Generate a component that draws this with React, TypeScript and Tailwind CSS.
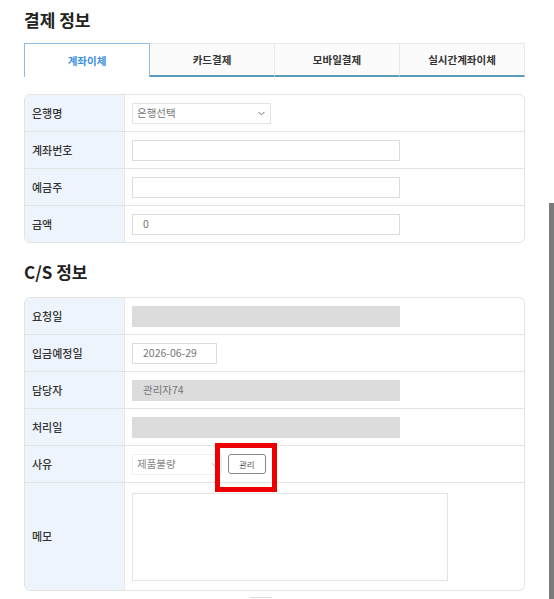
import { ChevronDown } from "lucide-react";

const font = { fontFamily: '"Noto Sans CJK KR", "Noto Sans", sans-serif' };

const tabs = ["계좌이체", "카드결제", "모바일결제", "실시간계좌이체"];

function Row({ label, children, last, tall }: { label: string; children: React.ReactNode; last?: boolean; tall?: boolean }) {
  return (
    <div className={`flex ${last ? "" : "border-b border-[#e3e3e3]"} ${tall ? "h-[107px]" : last ? "h-[36px]" : "h-[37px]"}`}>
      <div className="w-[100px] shrink-0 bg-[#eef4fb] border-r border-[#e3e8ef] flex items-center pl-[7px] text-[11px] font-medium text-[#333]">
        {label}
      </div>
      <div className="flex-1 flex items-center pl-[7px]">{children}</div>
    </div>
  );
}

function Input({ w, value, disabled }: { w: string; value?: string; disabled?: boolean }) {
  return (
    <div
      className={`${w} h-[21px] border ${disabled ? "bg-[#dcdcdc] border-[#dcdcdc]" : "bg-white border-[#dcdcdc]"} flex items-center px-[10px] text-[10.5px] text-[#777]`}
    >
      {value}
    </div>
  );
}

function Select({ w, value }: { w: string; value: string }) {
  return (
    <div className={`${w} h-[21px] border border-[#e4e4e4] bg-white flex items-center justify-between pl-[4px] pr-[3px] text-[10.5px] text-[#777]`}>
      <span>{value}</span>
      <ChevronDown className="w-[11px] h-[11px] text-[#666]" strokeWidth={2} />
    </div>
  );
}

export default function App() {
  return (
    <div style={font} className="relative w-[554px] h-[599px] bg-white overflow-hidden">
      <div className="pl-[24px] pr-[29px] pt-[8px]">
        <h2 className="text-[17px] font-bold text-[#222] leading-[24px]">결제 정보</h2>

        <div className="mt-[11px] flex h-[34px]">
          {tabs.map((t, i) => (
            <div
              key={t}
              className={`flex-1 flex items-center justify-center text-[10.5px] font-bold ${
                i === 0
                  ? "bg-white border border-[#8fbbe0] border-b-0 text-[#3d8fe0]"
                  : "bg-[#fbfbfb] border-t border-r border-[#e8e8e8] border-b-2 border-b-[#5b9db8] text-[#333]"
              }`}
            >
              {t}
            </div>
          ))}
        </div>

        <div className="mt-[17px] border border-[#e3e3e3] rounded-[6px] overflow-hidden">
          <Row label="은행명">
            <Select w="w-[139px]" value="은행선택" />
          </Row>
          <Row label="계좌번호">
            <Input w="w-[268px]" />
          </Row>
          <Row label="예금주">
            <Input w="w-[268px]" />
          </Row>
          <Row label="금액" last>
            <Input w="w-[268px]" value="0" />
          </Row>
        </div>

        <h2 className="mt-[17px] text-[17px] font-bold text-[#222] leading-[24px]">C/S 정보</h2>

        <div className="mt-[13px] border border-[#e3e3e3] rounded-[6px] overflow-hidden">
          <Row label="요청일">
            <Input w="w-[268px]" disabled />
          </Row>
          <Row label="입금예정일">
            <Input w="w-[85px]" value="2026-06-29" />
          </Row>
          <Row label="담당자">
            <Input w="w-[268px]" value="관리자74" disabled />
          </Row>
          <Row label="처리일">
            <Input w="w-[268px]" disabled />
          </Row>
          <Row label="사유">
            <div className="flex items-center gap-[6px]">
              <div className="w-[90px] h-[21px] border border-[#f0f0f0] flex items-center justify-between pl-[4px] pr-[2px] text-[10.5px] text-[#888]">
                <span>제품불량</span>
                <ChevronDown className="w-[9px] h-[9px] text-[#999]" strokeWidth={2} />
              </div>
              <button className="h-[20px] px-[10px] border border-[#888] rounded-[3px] bg-white text-[8.5px] text-[#555]">관리</button>
            </div>
          </Row>
          <Row label="메모" last tall>
            <div className="w-[316px] h-[88px] border border-[#e3e3e3] bg-white" />
          </Row>
        </div>
      </div>

      <div className="absolute left-[215px] top-[443px] w-[62px] h-[49px] border-[5px] border-[#ee0000]" />
      <div className="absolute left-[549px] top-[203px] w-[5px] h-[396px] bg-[#7a7a7a]" />
      <div className="absolute left-[250px] top-[597px] w-[22px] h-[1px] bg-[#ddd]" />
    </div>
  );
}
